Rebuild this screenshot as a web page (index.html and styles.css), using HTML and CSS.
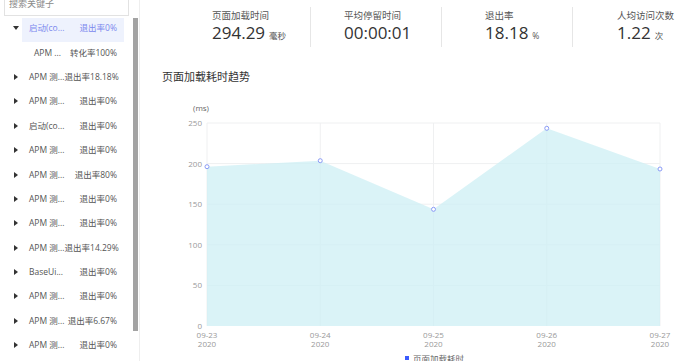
FILE: index.html
```html
<!DOCTYPE html>
<html lang="zh-CN">
<head>
<meta charset="utf-8">
<title>页面加载耗时</title>
<link rel="stylesheet" href="styles.css">
</head>
<body>
<div class="app">
  <aside class="sidebar">
    <div class="side-content">
      <div class="search">搜索关键子</div>
      <ul class="tree">
        <li class="row"><span class="caret caret-open"></span><div class="node node-active"><span class="name">启动(co...</span><span class="rate">退出率0%</span></div></li>
        <li class="row row-child"><span class="caret caret-none"></span><div class="node"><span class="name">APM ...</span><span class="rate">转化率100%</span></div></li>
        <li class="row"><span class="caret"></span><div class="node"><span class="name">APM 测...</span><span class="rate">退出率18.18%</span></div></li>
        <li class="row"><span class="caret"></span><div class="node"><span class="name">APM 测...</span><span class="rate">退出率0%</span></div></li>
        <li class="row"><span class="caret"></span><div class="node"><span class="name">启动(co...</span><span class="rate">退出率0%</span></div></li>
        <li class="row"><span class="caret"></span><div class="node"><span class="name">APM 测...</span><span class="rate">退出率0%</span></div></li>
        <li class="row"><span class="caret"></span><div class="node"><span class="name">APM 测...</span><span class="rate">退出率80%</span></div></li>
        <li class="row"><span class="caret"></span><div class="node"><span class="name">APM 测...</span><span class="rate">退出率0%</span></div></li>
        <li class="row"><span class="caret"></span><div class="node"><span class="name">APM 测...</span><span class="rate">退出率0%</span></div></li>
        <li class="row"><span class="caret"></span><div class="node"><span class="name">APM 测...</span><span class="rate">退出率14.29%</span></div></li>
        <li class="row"><span class="caret"></span><div class="node"><span class="name">BaseUi...</span><span class="rate">退出率0%</span></div></li>
        <li class="row"><span class="caret"></span><div class="node"><span class="name">APM 测...</span><span class="rate">退出率0%</span></div></li>
        <li class="row"><span class="caret"></span><div class="node"><span class="name">APM 测...</span><span class="rate">退出率6.67%</span></div></li>
        <li class="row"><span class="caret"></span><div class="node"><span class="name">APM 测...</span><span class="rate">退出率0%</span></div></li>
      </ul>
    </div>
    <div class="scroll-track"><div class="scroll-thumb"></div></div>
  </aside>
  <main class="main">
    <section class="stats">
      <div class="stat stat-1"><div class="stat-label">页面加载时间</div><div class="stat-value">294.29<span class="unit">毫秒</span></div></div>
      <div class="stat stat-2"><div class="stat-label">平均停留时间</div><div class="stat-value">00:00:01</div></div>
      <div class="stat stat-3"><div class="stat-label">退出率</div><div class="stat-value">18.18<span class="unit">%</span></div></div>
      <div class="stat stat-4"><div class="stat-label">人均访问次数</div><div class="stat-value">1.22<span class="unit">次</span></div></div>
    </section>
    <h2 class="chart-title">页面加载耗时趋势</h2>
    <svg class="chart" width="550" height="266" viewBox="0 0 550 266">
      <g transform="translate(-140,-95)">
        <text class="axis-unit" x="201" y="111">(ms)</text>
        <g class="grid">
          <line x1="207" y1="123" x2="660" y2="123"/>
          <line x1="207" y1="163.6" x2="660" y2="163.6"/>
          <line x1="207" y1="204.2" x2="660" y2="204.2"/>
          <line x1="207" y1="244.8" x2="660" y2="244.8"/>
          <line x1="207" y1="285.4" x2="660" y2="285.4"/>
          <line x1="207" y1="123" x2="207" y2="326"/>
          <line x1="320.25" y1="123" x2="320.25" y2="326"/>
          <line x1="433.5" y1="123" x2="433.5" y2="326"/>
          <line x1="546.75" y1="123" x2="546.75" y2="326"/>
          <line x1="660" y1="123" x2="660" y2="326"/>
        </g>
        <g class="ylabels">
          <text x="202" y="126">250</text>
          <text x="202" y="166.6">200</text>
          <text x="202" y="207.2">150</text>
          <text x="202" y="247.8">100</text>
          <text x="202" y="288.4">50</text>
          <text x="202" y="328.5">0</text>
        </g>
        <polygon class="area" points="207,166.7 320.25,160.7 433.5,209.3 546.75,128.3 660,169 660,326 207,326"/>
        <g class="dots">
          <circle cx="207" cy="166.7" r="2"/>
          <circle cx="320.25" cy="160.7" r="2"/>
          <circle cx="433.5" cy="209.3" r="2"/>
          <circle cx="546.75" cy="128.3" r="2"/>
          <circle cx="660" cy="169" r="2"/>
        </g>
        <g class="xlabels">
          <text x="207" y="338">09-23</text><text x="207" y="347">2020</text>
          <text x="320.25" y="338">09-24</text><text x="320.25" y="347">2020</text>
          <text x="433.5" y="338">09-25</text><text x="433.5" y="347">2020</text>
          <text x="546.75" y="338">09-26</text><text x="546.75" y="347">2020</text>
          <text x="660" y="338">09-27</text><text x="660" y="347">2020</text>
        </g>
        <rect class="legend-mark" x="405" y="356" width="4" height="4"/>
        <text class="legend-text" x="413" y="362">页面加载耗时</text>
      </g>
    </svg>
  </main>
</div>
</body>
</html>
```

FILE: styles.css
```css
* { box-sizing: border-box; }
html, body { margin: 0; padding: 0; background: #fff; }
body {
  font-family: "Open Sans", "Noto Sans CJK SC", sans-serif;
  color: #333;
  overflow: hidden;
  width: 690px;
  height: 361px;
}
.app { display: flex; height: 361px; overflow: hidden; }

/* sidebar */
.sidebar {
  display: flex;
  width: 140px;
  flex: 0 0 140px;
  border-right: 1px solid #eeeeee;
  padding-right: 1px;
}
.side-content { width: 133px; flex: 0 0 133px; }
.search {
  margin: -6px 0 0 4px;
  width: 125px;
  height: 22px;
  border: 1px solid #e2e2e2;
  border-top: none;
  padding: 4px 0 0 4px;
  font-size: 9px;
  line-height: 12px;
  color: #8a8a8a;
}
.tree { list-style: none; margin: 2px 0 0; padding: 0; }
.row {
  display: flex;
  height: 24.4px;
  padding-left: 10px;
}
.caret {
  flex: 0 0 12px;
  display: flex;
  align-items: center;
  justify-content: center;
  padding-bottom: 4px;
}
.caret::before {
  content: "";
  border-top: 3px solid transparent;
  border-bottom: 3px solid transparent;
  border-left: 4px solid #333;
}
.caret-open::before {
  border-left: 3px solid transparent;
  border-right: 3px solid transparent;
  border-top: 4px solid #333;
  border-bottom: none;
}
.caret-none::before { display: none; }
.node {
  flex: 0 0 102px;
  display: flex;
  justify-content: space-between;
  align-items: center;
  padding: 0 7px 4px 7px;
  font-size: 8.5px;
  line-height: 12px;
  color: #555;
  white-space: nowrap;
}
.row-child .node { padding-left: 12px; }
.node-active { background: #eef2fd; color: #7b88ee; }
.scroll-track { flex: 0 0 5px; padding-top: 18px; }
.scroll-thumb { height: 313px; background: #a3a3a3; }

/* main */
.main { flex: 1; display: flex; flex-direction: column; }
.stats { display: flex; height: 55px; padding-top: 7px; }
.stat { height: 40px; padding-top: 3px; }
.stat + .stat { border-left: 1px solid #e6e6e6; }
.stat-1 { flex: 0 0 170px; padding-left: 72px; }
.stat-2 { flex: 0 0 131px; padding-left: 33px; }
.stat-3 { flex: 0 0 131px; padding-left: 43px; }
.stat-4 { flex: 1; padding-left: 44px; }
.stat-label { font-size: 9.5px; line-height: 12px; color: #555; }
.stat-value { font-size: 17px; line-height: 22px; color: #333; white-space: nowrap; }
.unit { font-size: 8.5px; margin-left: 4px; color: #555; }

.chart-title {
  margin: 0;
  height: 40px;
  padding: 14px 0 0 22px;
  font-size: 11px;
  line-height: 16px;
  font-weight: normal;
  color: #333;
}
.chart { display: block; }
.chart text { font-family: "Open Sans", "Noto Sans CJK SC", sans-serif; }
.axis-unit { font-size: 8px; fill: #666; text-anchor: middle; }
.grid line { stroke: #eff0f1; stroke-width: 1; }
.ylabels text { font-size: 8px; fill: #999; text-anchor: end; }
.area { fill: #cdeff4; fill-opacity: 0.75; }
.dots circle { fill: #fff; stroke: #8a9bf6; stroke-width: 1; }
.xlabels text { font-size: 8px; fill: #999; text-anchor: middle; }
.legend-mark { fill: #3b5bfd; }
.legend-text { font-size: 8.5px; fill: #666; }
```
